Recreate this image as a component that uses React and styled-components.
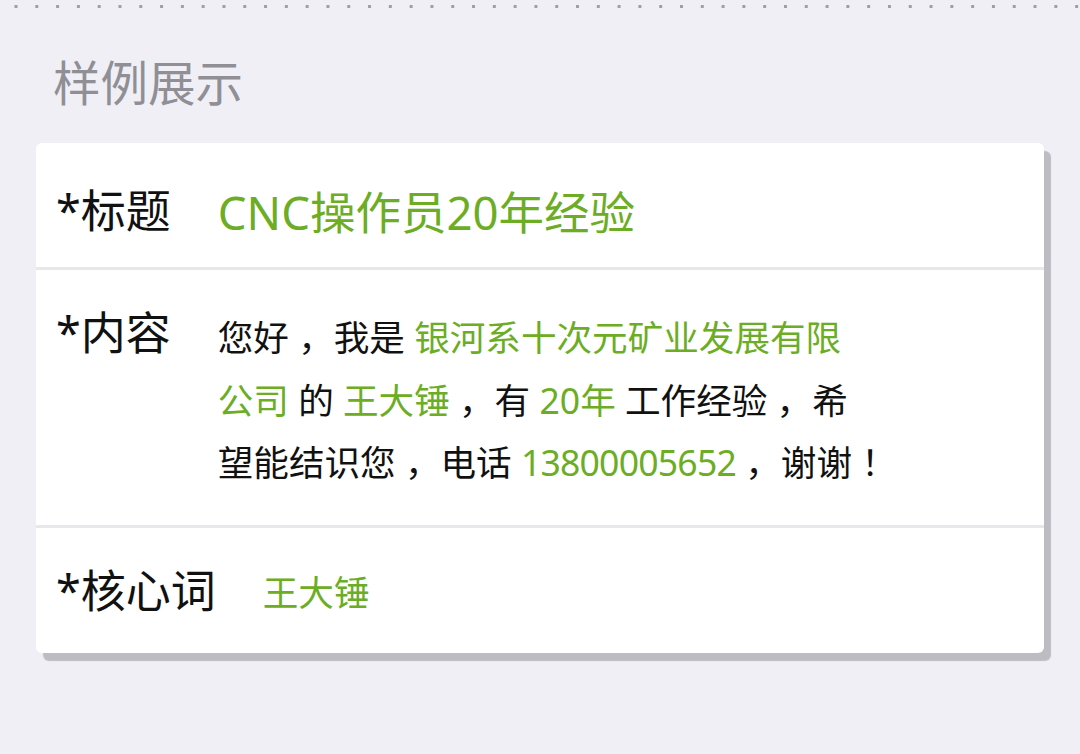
import React from "react";
import styled, { createGlobalStyle } from "styled-components";

const GlobalStyle = createGlobalStyle`
  html, body {
    margin: 0;
    padding: 0;
    background: #f0eff6;
  }
  body {
    font-family: "Noto Sans", "Noto Sans CJK SC", sans-serif;
  }
`;

const Page = styled.div`
  height: 754px;
  overflow: hidden;
  background: #f0eff6;
`;

const Dots = styled.div`
  height: 13px;
  background-image: radial-gradient(circle, #9e9ea6 1.4px, transparent 2px);
  background-size: 20.8px 13px;
  background-position: 5.6px 0;
  background-repeat: repeat-x;
`;

const Heading = styled.h2`
  margin: 0;
  padding: 42px 0 32px 53px;
  font-size: 47.5px;
  line-height: 56px;
  font-weight: 400;
  color: #8f8f95;
`;

const Card = styled.div`
  margin: 0 36px;
  background: #fff;
  border-radius: 6px;
  box-shadow: 7px 8px 1px #bdbcc3;
`;

const Row = styled.div`
  display: flex;
  align-items: ${(p) => (p.$top ? "flex-start" : "center")};
  gap: 47px;
  height: ${(p) => p.$h}px;
  box-sizing: border-box;
  padding: ${(p) => p.$pt || 0}px 0 0 20px;
  border-bottom: ${(p) => (p.$last ? "none" : "3px solid #e8e8ec")};
`;

const Label = styled.div`
  flex: none;
  font-size: 45px;
  line-height: 60px;
  color: #111;
  white-space: nowrap;
`;

const Title = styled.div`
  font-size: 45.5px;
  line-height: 60px;
  color: #6cad24;
  padding-top: 2px;
`;

const Content = styled.div`
  font-size: 35.6px;
  line-height: 62.5px;
  color: #111;
  padding-top: 3px;
`;

const Keyword = styled.div`
  font-size: 35.6px;
  line-height: 60px;
  color: #6cad24;
  padding-top: 3px;
`;

const Hl = styled.span`
  color: #6cad24;
  letter-spacing: ${(p) => (p.$tight ? "-0.8px" : "normal")};
`;

export default function App() {
  return (
    <Page>
      <GlobalStyle />
      <Dots />
      <Heading>样例展示</Heading>
      <Card>
        <Row $h={127} $pt={12}>
          <Label>*标题</Label>
          <Title>CNC操作员20年经验</Title>
        </Row>
        <Row $h={258} $pt={33} $top>
          <Label>*内容</Label>
          <Content>
            您好 ，我是 <Hl>银河系十次元矿业发展有限</Hl>
            <br />
            <Hl>公司</Hl> 的 <Hl>王大锤</Hl> ，有 <Hl>20年</Hl> 工作经验 ，希
            <br />
            望能结识您 ，电话 <Hl $tight>13800005652</Hl> ，谢谢 ！
          </Content>
        </Row>
        <Row $h={125} $last>
          <Label>*核心词</Label>
          <Keyword>王大锤</Keyword>
        </Row>
      </Card>
    </Page>
  );
}
